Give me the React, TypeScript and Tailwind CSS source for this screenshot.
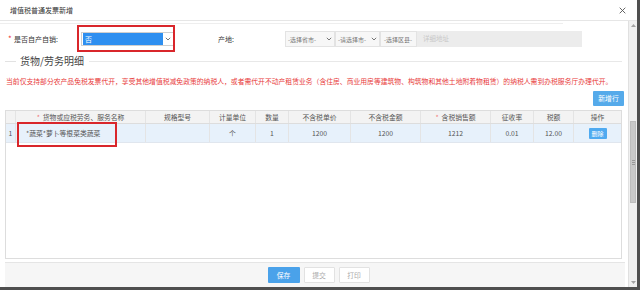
import type React from 'react';

const cols = 'grid grid-cols-[10px_130px_64px_46px_33px_62px_70px_70px_43px_40px_47px]';

const Chevron = () => (
  <svg width="6" height="4" viewBox="0 0 6 4" className="shrink-0">
    <polyline points="0.8,0.8 3,3 5.2,0.8" fill="none" stroke="#666" strokeWidth="0.9" />
  </svg>
);

const AreaSelect = ({ label, w }: { label: string; w: string }) => (
  <div
    className={`${w} h-[16px] flex items-center justify-between pl-[2px] pr-[2px] whitespace-nowrap bg-[#f7f7f7] border border-[#e3e3e3] text-[6px] text-[#777]`}
  >
    <span>{label}</span>
    <Chevron />
  </div>
);

const Cell = ({ children, className = '' }: { children?: React.ReactNode; className?: string }) => (
  <div className={`flex items-center justify-center border-r border-[#e4e4e4] ${className}`}>{children}</div>
);

const headers = ['规格型号', '计量单位', '数量', '不含税单价', '不含税金额'];

export default function App() {
  return (
    <div className="w-[640px] h-[290px] bg-[#4f4f4f] overflow-hidden font-['Noto_Sans_CJK_SC','Noto_Sans',sans-serif]">
      <div className="w-[637px] h-[287px] bg-white flex flex-col">
        {/* title bar */}
        <div className="h-[21px] shrink-0 flex items-center justify-between pl-[10px] pr-[11px] border-b border-[#e6e6e6] text-[7px] text-[#333]">
          <span>增值税普通发票新增</span>
          <svg width="7" height="7" viewBox="0 0 7 7">
            <path d="M0.7 0.7 L6.3 6.3 M6.3 0.7 L0.7 6.3" stroke="#555" strokeWidth="0.9" />
          </svg>
        </div>

        <div className="flex flex-1 min-h-0">
          <div className="w-[628px] flex flex-col relative">
            <div className="mt-[2px] h-px w-[563px] bg-[#eeeeee]" />

            {/* form row */}
            <div className="mt-[1px] h-[28px] flex items-center pl-[8px]">
              <span className="w-[6px] text-[8px] text-[#e33] leading-none">*</span>
              <span className="w-[67px] text-[7px] text-[#333]">是否自产自销:</span>
              <div className="w-[93px] h-[14px] flex items-center border border-[#cfcfcf] bg-white pl-px">
                <div className="w-[80px] h-[12px] bg-[#2e8ff0] text-white text-[7px] leading-[12px] pl-[2px]">否</div>
                <div className="flex-1 flex justify-center">
                  <Chevron />
                </div>
              </div>
              <span className="ml-[44px] text-[7px] text-[#333]">产地:</span>
              <div className="ml-[51px] flex">
                <AreaSelect label="-选择省市-" w="w-[50px]" />
                <AreaSelect label="-请选择市-" w="w-[45px]" />
                <div className="w-[37px] h-[16px] flex items-center pl-[3px] whitespace-nowrap bg-[#f7f7f7] border border-[#e3e3e3] text-[6px] text-[#777]">
                  -选择区县-
                </div>
                <div className="w-[165px] h-[16px] flex items-center pl-[6px] bg-[#ececec] text-[6.5px] text-[#c8c8c8]">
                  详细地址
                </div>
              </div>
            </div>

            {/* section legend */}
            <div className="mt-[2px] h-[12px] flex items-center">
              <div className="ml-[5px] w-[11px] h-px bg-[#e2e2e2]" />
              <span className="ml-[4px] text-[10px] leading-none text-[#444]">货物/劳务明细</span>
              <div className="ml-[5px] mr-[6px] flex-1 h-px bg-[#e8e8e8]" />
            </div>

            {/* notice */}
            <div className="mt-[8px] h-[12px] leading-[12px] pl-[6px] whitespace-nowrap text-[6.82px] text-[#e83a3a]">
              当前仅支持部分农产品免税发票代开，享受其他增值税减免政策的纳税人，或者需代开不动产租赁业务（含住房、商业用房等建筑物、构筑物和其他土地附着物租赁）的纳税人需到办税服务厅办理代开。
            </div>

            <div className="mt-[4px] h-[15px] flex justify-end pr-[4px]">
              <button
                type="button"
                className="w-[31px] h-[15px] bg-[#55aaea] text-white text-[6.8px] rounded-[1px]"
              >
                新增行
              </button>
            </div>

            {/* table */}
            <div className="mt-[4px] ml-[5px] w-[617px] h-[149px] border border-[#dddddd] text-[6.8px] text-[#555]">
              <div className={`${cols} h-[13px] bg-[#f3f3f3] border-b border-[#dddddd]`}>
                <Cell />
                <Cell>
                  <span className="text-[#f07070] mr-[3px]">*</span>货物或应税劳务、服务名称
                </Cell>
                {headers.map((h) => (
                  <Cell key={h}>{h}</Cell>
                ))}
                <Cell>
                  <span className="text-[#f07070] mr-[3px]">*</span>含税销售额
                </Cell>
                <Cell>征收率</Cell>
                <Cell>税额</Cell>
                <Cell className="border-r-0">操作</Cell>
              </div>
              <div className={`${cols} h-[19px] bg-[#e7f1fb] border-b border-[#e0e6ee]`}>
                <Cell>1</Cell>
                <Cell className="justify-start pl-[10px]">*蔬菜*萝卜等根菜类蔬菜</Cell>
                <Cell />
                <Cell>个</Cell>
                <Cell>1</Cell>
                <Cell>1200</Cell>
                <Cell>1200</Cell>
                <Cell>1212</Cell>
                <Cell>0.01</Cell>
                <Cell>12.00</Cell>
                <Cell className="border-r-0">
                  <span className="w-[18px] h-[11px] bg-[#4faaf0] text-white text-[6px] leading-[11px] text-center rounded-[1px]">
                    删除
                  </span>
                </Cell>
              </div>
            </div>

            {/* footer */}
            <div className="mt-[3px] ml-[5px] w-[620px] flex-1 bg-[#f6f6f6] border-t border-[#e5e5e5] flex items-center justify-center pl-[7px] gap-[4px] text-[6.8px]">
              <button type="button" className="w-[32px] h-[16px] bg-[#4aa2ea] text-white rounded-[1px]">
                保存
              </button>
              <button
                type="button"
                className="w-[31px] h-[16px] bg-white border border-[#e2e2e2] text-[#aaa] rounded-[1px]"
              >
                提交
              </button>
              <button
                type="button"
                className="w-[31px] h-[16px] bg-white border border-[#e2e2e2] text-[#aaa] rounded-[1px]"
              >
                打印
              </button>
            </div>

            {/* annotation boxes */}
            <div className="absolute left-[77px] top-[4px] w-[98px] h-[27px] border-2 border-[#d9262b]" />
            <div className="absolute left-[17px] top-[101px] w-[100px] h-[25px] border-2 border-[#d9262b]" />
          </div>

          {/* scrollbar */}
          <div className="w-[9px] flex flex-col bg-[#f0f0f0] border-l border-[#e0e0e0]">
            <div className="h-[9px] flex items-center justify-center">
              <svg width="5" height="3" viewBox="0 0 5 3">
                <polygon points="2.5,0 5,3 0,3" fill="#a3a3a3" />
              </svg>
            </div>
            <div className="h-[91px]" />
            <div className="h-[82px] mx-px bg-[#c9c9c9] border border-[#bdbdbd] flex flex-col items-center justify-center gap-px">
              <div className="w-[3px] h-px bg-[#999]" />
              <div className="w-[3px] h-px bg-[#999]" />
              <div className="w-[3px] h-px bg-[#999]" />
            </div>
            <div className="flex-1" />
            <div className="h-[9px] flex items-center justify-center">
              <svg width="5" height="3" viewBox="0 0 5 3">
                <polygon points="0,0 5,0 2.5,3" fill="#a3a3a3" />
              </svg>
            </div>
          </div>
        </div>
      </div>
    </div>
  );
}
